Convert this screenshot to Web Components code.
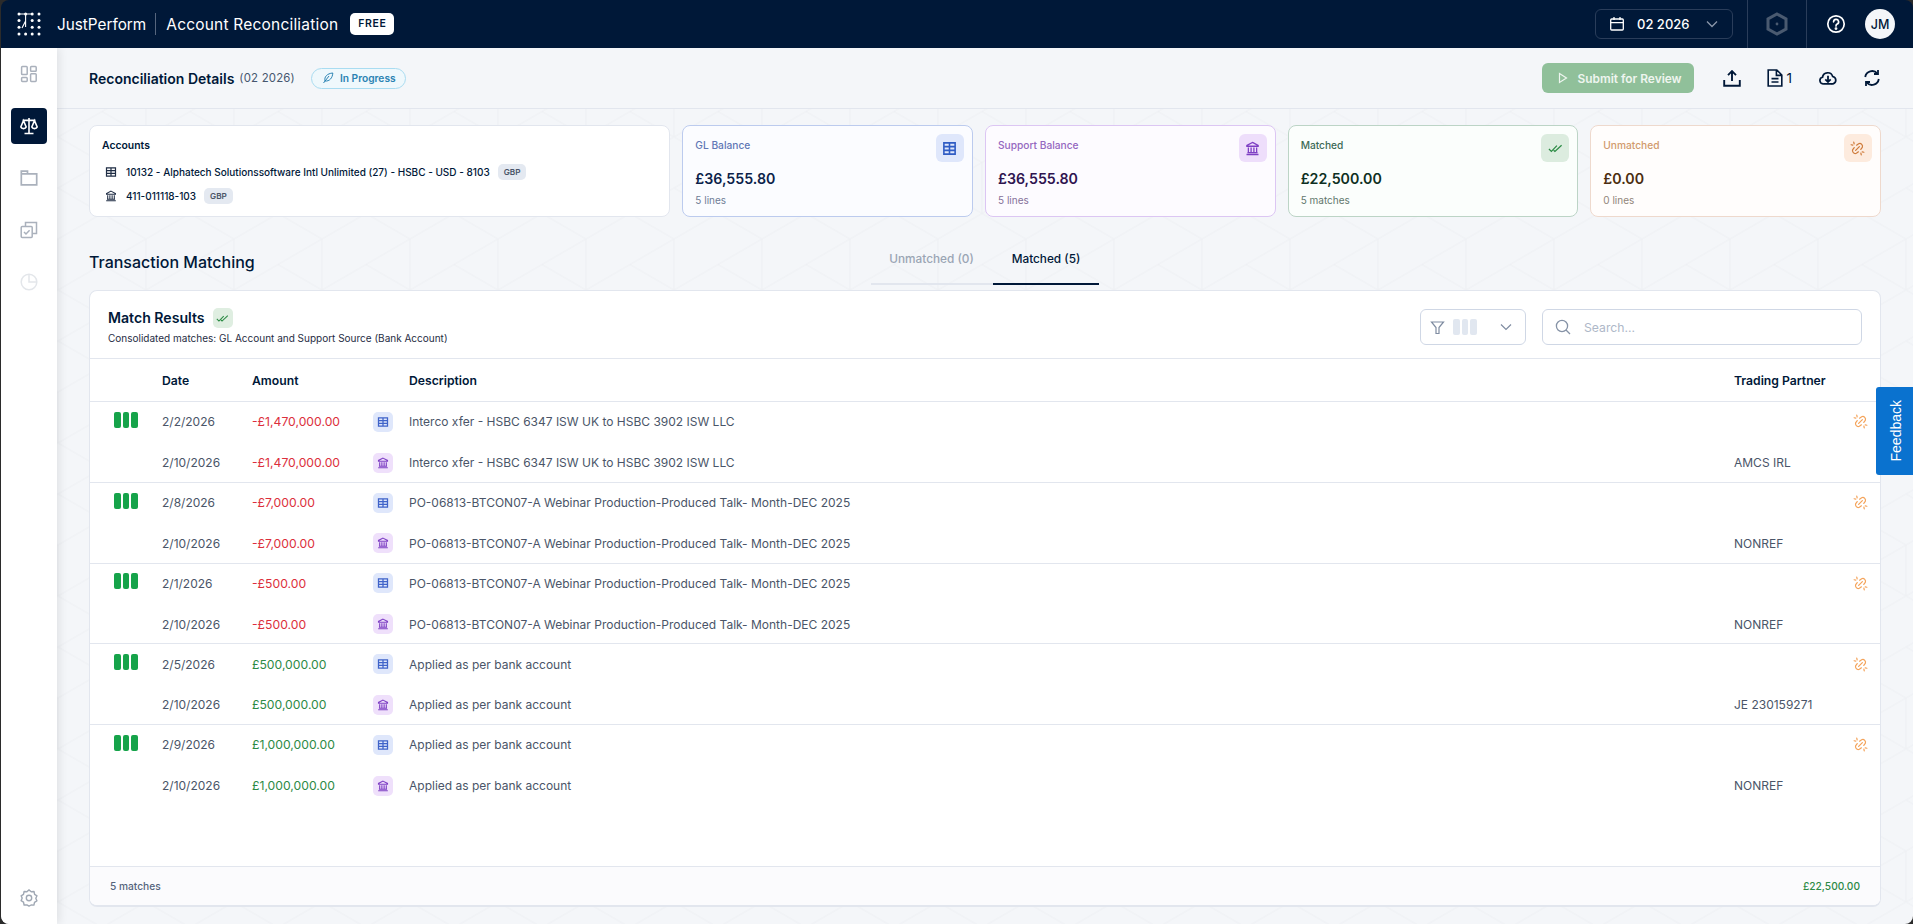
<!DOCTYPE html>
<html>
<head>
<meta charset="utf-8">
<style>
  html, body { margin: 0; height: 100%; background: #2b2b2b; overflow: hidden; }
  body { font-family: Inter, "Noto Sans", sans-serif; }
</style>
</head>
<body>
<template id="app-header-tpl">
  <style>
    :host { display: flex; align-items: center; height: 48px; flex: none; background: #001838; color: #fff; border-radius: 8px 8px 0 0; padding-left: 16px; box-sizing: border-box; }
    .logo { display: flex; width: 24px; height: 24px; margin-right: 16px; }
    .brand { font-size: 15.3px; }
    .sep { width: 1px; height: 22px; background: #56657d; margin: 0 10px 0 9px; }
    .app { font-size: 15.5px; letter-spacing: .2px; }
    .free { background: #fff; color: #001838; font-size: 10.5px; font-weight: 600; letter-spacing: .6px; border-radius: 5px; padding: 0 8px; height: 22px; line-height: 22px; margin-left: 12px; }
    .right { margin-left: auto; display: flex; align-items: center; height: 100%; }
    .period { box-sizing: border-box; width: 138px; height: 30px; border: 1px solid #2a3d5a; border-radius: 6px; display: flex; align-items: center; padding-left: 13px; font-size: 13px; font-weight: 500; margin-right: 14px; }
    .period b { font-weight: 500; margin-left: 12px; }
    .period svg:last-child { margin-left: auto; margin-right: 13px; }
    .cell { border-left: 1px solid #2a3d5a; height: 100%; width: 58px; display: flex; align-items: center; justify-content: center; }
    .tools { border-left: 1px solid #2a3d5a; height: 100%; display: flex; align-items: center; padding: 0 18px 0 19px; gap: 19px; }
    .avatar { width: 30px; height: 30px; border-radius: 50%; background: #f4f6f9; color: #001838; font-size: 12.5px; font-weight: 500; display: flex; align-items: center; justify-content: center; }
  </style>
  <svg class="logo" viewBox="0 0 24 24" fill="#fff">
    <circle cx="2" cy="2" r="1.5"/><circle cx="8.6" cy="2" r="1.5"/><circle cx="15.2" cy="2" r="1.5"/><circle cx="22" cy="2" r="1.5"/>
    <circle cx="2" cy="8.6" r="1.5"/><circle cx="15.2" cy="8.6" r="1.5"/><circle cx="22" cy="8.6" r="1.5"/>
    <circle cx="2" cy="15.2" r="1.5"/><circle cx="15.2" cy="15.2" r="1.5"/><circle cx="22" cy="15.2" r="1.5"/>
    <circle cx="2" cy="22" r="1.5"/><circle cx="8.6" cy="22" r="1.5"/><circle cx="15.2" cy="22" r="1.5"/><circle cx="22" cy="22" r="1.5"/>
    <path d="M2 2h13M8.6 2v7L5 16M8.6 9v6" stroke="#fff" stroke-width="1.1" fill="none"/>
  </svg>
  <span class="brand">JustPerform</span><span class="sep"></span><span class="app">Account Reconciliation</span><span class="free">FREE</span>
  <div class="right">
    <div class="period">
      <svg width="16" height="16" viewBox="0 0 16 16" fill="none" stroke="#fff" stroke-width="1.3"><rect x="1.7" y="3" width="12.6" height="11" rx="1"/><path d="M1.7 6.6h12.6M5 1v3M11 1v3"/></svg>
      <b>02 2026</b>
      <svg width="14" height="14" viewBox="0 0 14 14" fill="none" stroke="#8a97aa" stroke-width="1.3"><path d="M2 4.5 7 9.5l5-5"/></svg>
    </div>
    <div class="cell"><svg width="22" height="24" viewBox="0 0 22 24" fill="none" stroke="#4a5a70" stroke-width="3"><path d="M11 2 20 7v10l-9 5-9-5V7z"/><circle cx="11" cy="12" r="1.4" fill="#4a5a70" stroke="none"/></svg></div>
    <div class="tools">
      <svg width="20" height="20" viewBox="0 0 20 20" fill="none" stroke="#fff" stroke-width="1.7"><circle cx="10" cy="10" r="8.2"/><path d="M7.6 7.8a2.5 2.5 0 1 1 3.6 2.3c-.8.4-1.2 1-1.2 1.9" stroke-linecap="round"/><circle cx="10" cy="14.6" r=".6" fill="#fff"/></svg>
      <div class="avatar">JM</div>
    </div>
  </div>
</template>

<template id="side-nav-tpl">
  <style>
    :host { display: flex; flex-direction: column; align-items: center; width: 56px; flex: none; background: #fff; padding: 8px 0 0; box-sizing: border-box; box-shadow: 3px 0 8px rgba(0,0,0,.08); position: relative; z-index: 2; border-radius: 0 0 0 8px; }
    a { width: 36px; height: 36px; display: flex; align-items: center; justify-content: center; border-radius: 4px; color: #aab1bc; margin-bottom: 16px; }
    a.on { background: #001838; color: #fff; }
    a.dim { color: #e3e6ea; }
    .gear { margin-top: auto; margin-bottom: 8px; color: #a0a8b4; }
  </style>
  <a><svg width="18" height="18" viewBox="0 0 18 18" fill="none" stroke="currentColor" stroke-width="1.5"><rect x="1.6" y="1.6" width="5.6" height="8" rx=".8"/><rect x="10.6" y="1.6" width="5.6" height="4.6" rx=".8"/><rect x="1.6" y="12.6" width="5.6" height="3.8" rx=".8"/><rect x="10.6" y="8.8" width="5.6" height="7.6" rx=".8"/></svg></a>
  <a class="on"><svg width="20" height="20" viewBox="0 0 20 20" fill="none" stroke="currentColor" stroke-width="1.6"><path d="M10 2v15M5.5 17.5h9M3.5 4.4h13M4.5 4.6 1.8 11a2.8 2.2 0 0 0 5.4 0zM15.5 4.6 12.8 11a2.8 2.2 0 0 0 5.4 0z"/></svg></a>
  <a><svg width="18" height="18" viewBox="0 0 18 18" fill="none" stroke="currentColor" stroke-width="1.7"><path d="M1.3 2.2h6.2v2.6h9.2v11H1.3zM1.3 4.8h6.2"/></svg></a>
  <a><svg width="18" height="18" viewBox="0 0 18 18" fill="none" stroke="currentColor" stroke-width="1.5"><rect x="1.2" y="5.6" width="11" height="11" rx="1"/><path d="M5.5 5.5V1.5h11v11h-4M4 11l2 2 3.6-3.8"/></svg></a>
  <a class="dim"><svg width="18" height="18" viewBox="0 0 18 18" fill="none" stroke="currentColor" stroke-width="1.5"><circle cx="9" cy="9" r="7.8"/><path d="M9 1.2V9h7.8"/></svg></a>
  <a class="gear"><svg width="18" height="18" viewBox="0 0 18 18" fill="none" stroke="currentColor" stroke-width="1.4"><path d="M9 .9l2.2 1.8 2.8-.2.6 2.8 2.4 1.5L15.8 9.2l1.1 2.6-2.4 1.5-.6 2.8-2.8-.1L9 17.1 6.9 15.9l-2.8.1-.6-2.8-2.4-1.5 1.1-2.6L1.1 6.8l2.4-1.5.6-2.8 2.8.2z" stroke-linejoin="round"/><circle cx="9" cy="9" r="2.7"/></svg></a>
</template>

<template id="page-head-tpl">
  <style>
    :host { display: flex; align-items: center; height: 61px; flex: none; box-sizing: border-box; padding: 0 32px; border-bottom: 1px solid #e2e6ee; color: #001838; background: #f4f6f9; position: relative; }
    h1 { font-size: 14px; font-weight: 600; margin: 0; }
    .per { font-size: 11.4px; color: #46566e; margin-left: 5px; letter-spacing: .2px; }
    .pill { display: flex; align-items: center; gap: 6px; height: 21px; box-sizing: border-box; border: 1px solid #a9dcf1; background: #eff8fc; border-radius: 11px; padding: 0 9px 0 10px; font-size: 10.2px; font-weight: 600; color: #2a83b3; margin-left: 16px; }
    .acts { margin-left: auto; display: flex; align-items: center; color: #001838; }
    .submit { width: 152px; height: 30px; border-radius: 6px; background: #90c09a; color: #eef5ef; font-size: 11.9px; font-weight: 600; display: flex; align-items: center; box-sizing: border-box; padding-left: 16px; gap: 10px; margin-right: 29px; }
    .ic { display: flex; align-items: center; }
    .n { font-size: 13.5px; margin-left: 4px; }
  </style>
  <h1>Reconciliation Details</h1><span class="per">(02 2026)</span>
  <span class="pill"><svg width="12" height="12" viewBox="0 0 12 12" fill="none" stroke="#2a83b3" stroke-width="1"><path d="M1.5 11 7 4M3 9C2 5 5 1.5 10.8 1 10.5 6 7.5 9.5 3 9z"/></svg>In Progress</span>
  <div class="acts">
    <div class="submit"><svg width="10" height="12" viewBox="0 0 10 12" fill="none" stroke="#eef5ef" stroke-width="1.2"><path d="M1.5 1.5 8.5 6l-7 4.5z"/></svg>Submit for Review</div>
    <span class="ic" style="margin-right:26px"><svg width="18" height="18" viewBox="0 0 18 18" fill="none" stroke="currentColor" stroke-width="1.9"><path d="M9 12V2.5M5 6.2 9 2.2l4 4"/><path d="M1.2 11v5.7h15.6V11"/></svg></span>
    <span class="ic" style="margin-right:27px"><svg width="16" height="18" viewBox="0 0 16 18" fill="none" stroke="currentColor" stroke-width="1.6"><path d="M1.2 1h8.6l5 5v11H1.2zM9.4 1v5.4h5.4M4.5 9.6h7M4.5 13h7"/></svg><span class="n">1</span></span>
    <span class="ic" style="margin-right:26px"><svg width="18" height="18" viewBox="0 0 20 20" fill="none" stroke="currentColor" stroke-width="1.9"><path d="M5.5 16.5h-1a3.7 3.7 0 0 1-.6-7.3 5.8 5.8 0 0 1 11.3-.9 4.2 4.2 0 0 1 .3 8.2h-1.5"/><path d="M5.5 16.5h9"/><path d="M10 7.5v7M7 11.5l3 3 3-3" stroke-width="2"/></svg></span>
    <span class="ic"><svg width="18" height="18" viewBox="0 0 18 18" fill="none" stroke="currentColor" stroke-width="1.8"><path d="M2.2 8a7 7 0 0 1 12.2-3.5M15.8 10a7 7 0 0 1-12.2 3.5"/><path d="M15 1v4h-4M3 17v-4h4"/></svg></span>
  </div>
</template>

<template id="accounts-card-tpl">
  <style>
    :host { display: block; background: #fff; border: 1px solid #e2e6ee; border-radius: 8px; padding: 12px 12px 0; box-sizing: border-box; color: #001838; height: 92px; }
    .t { font-size: 10.4px; font-weight: 600; margin-bottom: 6px; line-height: 16px; }
    .r { display: flex; align-items: center; height: 24px; font-size: 10px; font-weight: 500; }
    svg { width: 12px; height: 12px; margin: 0 9px 0 3px; flex: none; }
    .c { background: #e4e9f1; color: #4a5568; font-size: 8.2px; font-weight: 600; height: 16px; line-height: 16px; padding: 0 6px; border-radius: 5px; margin-left: 8px; }
  </style>
  <div class="t">Accounts</div>
  <div class="r"><svg viewBox="0 0 16 16" fill="none" stroke="#1f2d44" stroke-width="1.6"><path d="M2 2.5h12v11H2zM2 6.2h12M2 9.8h12M8 2.5v11"/></svg>10132 - Alphatech Solutionssoftware Intl Unlimited (27) - HSBC - USD - 8103<span class="c">GBP</span></div>
  <div class="r"><svg viewBox="0 0 16 16" fill="none" stroke="#1f2d44" stroke-width="1.4"><path d="M8 1.5 14 4.6v1H2v-1zM3.6 7v4.6M6.5 7v4.6M9.5 7v4.6M12.4 7v4.6M2.6 12.4h10.8M1.6 14.4h12.8"/></svg>411-011118-103<span class="c">GBP</span></div>
</template>

<template id="stat-card-tpl">
  <style>
    :host { display: block; position: relative; box-sizing: border-box; height: 92px; border: 1px solid var(--bd); background: var(--bg); border-radius: 8px; padding: 12px 12px; }
    .t { font-size: 10.2px; font-weight: 500; color: var(--tc); line-height: 14px; }
    .v { font-size: 14.2px; font-weight: 600; color: var(--vc); margin-top: 17px; line-height: 20px; }
    .s { font-size: 10px; color: var(--sc); margin-top: 4px; line-height: 14px; }
    .i { position: absolute; top: 8px; right: 8px; width: 28px; height: 28px; border-radius: 6px; background: var(--ib); color: var(--ic); display: flex; align-items: center; justify-content: center; }
    ::slotted(svg) { width: 15px; height: 15px; }
  </style>
  <div class="t" id="t"></div>
  <div class="v" id="v"></div>
  <div class="s" id="s"></div>
  <div class="i"><slot></slot></div>
</template>

<template id="match-tabs-tpl">
  <style>
    :host { display: flex; align-items: flex-end; color: #001838; font-size: 11.8px; font-weight: 500; }
    div { height: 37px; box-sizing: border-box; line-height: 22px; text-align: center; }
    .a { width: 122px; color: #9aa5b4; border-bottom: 2px solid #e2e6ee; padding-right: 1px; }
    .b { width: 106px; border-bottom: 2px solid #001838; }
  </style>
  <div class="a">Unmatched (0)</div><div class="b">Matched (5)</div>
</template>

<template id="match-row-tpl">
  <style>
    :host { display: block; border-bottom: 1px solid #e2e6ee; }
    :host(:last-child) { border-bottom: 0; }
    .line { display: grid; grid-template-columns: 72px 90px 121px 36px 1fr 119px 27px; height: 39.88px; box-sizing: border-box; align-items: center; font-size: 12px; color: #4a5568; }
    .line + .line { padding-top: 1.5px; }
    .bars { display: flex; gap: 2px; padding-left: 24px; margin-top: -4px; }
    .bars i { width: 6.5px; height: 16px; border-radius: 2px; background: #16a34a; display: block; }
    .amt { color: var(--amt); font-size: 12.2px; }
    .bd { width: 20px; height: 20px; border-radius: 5px; display: flex; align-items: center; justify-content: center; }
    .gl { background: #dfe7fb; color: #3f63c9; }
    .sp { background: #efe0fb; color: #7e3fc4; }
    .bd svg { width: 12px; height: 12px; }
    .lk { color: #f4a35a; display: flex; }
    .lk svg { width: 15px; height: 15px; }
  </style>
  <div class="line">
    <div class="bars"><i></i><i></i><i></i></div><div id="d1"></div><div class="amt" id="a1"></div>
    <div class="bd gl"><svg viewBox="0 0 16 16" fill="none" stroke="currentColor" stroke-width="1.7"><path d="M2 2.5h12v11H2zM2 6.2h12M2 9.8h12M8 2.5v11"/></svg></div>
    <div id="t1"></div><div></div>
    <div class="lk"><svg viewBox="0 0 16 16" fill="none" stroke="currentColor" stroke-width="1.3" stroke-linecap="round"><path d="M7 4.5 9.2 2.9a3 3 0 0 1 3.9 4L11.5 9M9 11.5l-2.2 1.6a3 3 0 0 1-3.9-4L4.5 7M6 10l4-4M4 1.2l.4 1.8M1.2 4l1.8.4M12 14.8l-.4-1.8M14.8 12l-1.8-.4"/></svg></div>
  </div>
  <div class="line">
    <div></div><div id="d2"></div><div class="amt" id="a2"></div>
    <div class="bd sp"><svg viewBox="0 0 16 16" fill="none" stroke="currentColor" stroke-width="1.5"><path d="M8 1.5 14 4.6v1H2v-1zM3.6 7v4.6M6.5 7v4.6M9.5 7v4.6M12.4 7v4.6M2.6 12.4h10.8M1.6 14.4h12.8"/></svg></div>
    <div id="t2"></div><div id="p"></div><div></div>
  </div>
</template>

<template id="match-table-tpl">
  <style>
    :host { display: flex; flex-direction: column; background: #fff; border: 1px solid #e2e6ee; border-bottom-width: 2px; border-radius: 8px; color: #001838; flex: 1; min-height: 0; overflow: hidden; }
    .top { display: flex; height: 68px; flex: none; box-sizing: border-box; padding: 17px 18px 0 18px; border-bottom: 1px solid #e2e6ee; }
    .ttl { display: flex; align-items: center; gap: 8px; font-size: 14.1px; font-weight: 600; line-height: 20px; }
    .bd { width: 20px; height: 20px; border-radius: 5px; background: #dfeee1; color: #2a8a43; display: flex; align-items: center; justify-content: center; }
    .bd svg { width: 13px; height: 13px; }
    .sub { font-size: 10px; margin-top: 4px; line-height: 12px; color: #1f2d44; }
    .ctl { margin-left: auto; display: flex; gap: 16px; margin-top: 1px; }
    .flt { width: 106px; height: 36px; box-sizing: border-box; border: 1px solid #cfd7e5; border-radius: 6px; display: flex; align-items: center; padding-left: 9px; }
    .flt i { width: 6.5px; height: 16px; background: #e1e7f0; border-radius: 2px; margin-right: 2px; display: block; }
    .flt svg:first-child { margin-right: 8px; }
    .flt svg:last-child { margin-left: auto; margin-right: 12px; }
    .srch { width: 320px; height: 36px; box-sizing: border-box; border: 1px solid #cfd7e5; border-radius: 6px; display: flex; align-items: center; padding-left: 12px; gap: 13px; color: #aeb8c8; font-size: 12.2px; }
    .head { display: grid; grid-template-columns: 72px 90px 157px 1fr 146px; height: 43px; flex: none; align-items: center; box-sizing: border-box; border-bottom: 1px solid #e2e6ee; font-size: 12.2px; font-weight: 600; }
    .body { flex: 1; min-height: 0; }
    .foot { flex: none; height: 39px; display: flex; align-items: center; justify-content: space-between; padding: 0 20px; background: #fbfbfd; border-top: 1px solid #e2e6ee; font-size: 10.2px; font-weight: 500; color: #55647c; box-sizing: border-box; }
    .foot b { font-weight: 500; color: #2d8a45; }
  </style>
  <div class="top">
    <div>
      <div class="ttl">Match Results<span class="bd"><svg viewBox="0 0 16 16" fill="none" stroke="currentColor" stroke-width="1.3"><path d="M1 8.5l2.6 2.6L9.5 5M6 9.8l1.4 1.3L14.5 4.5"/></svg></span></div>
      <div class="sub">Consolidated matches: GL Account and Support Source (Bank Account)</div>
    </div>
    <div class="ctl">
      <div class="flt">
        <svg width="15" height="15" viewBox="0 0 15 15" fill="none" stroke="#7f8ca1" stroke-width="1.2"><path d="M1.5 2h12L9 7.5V13.5H6V7.5z"/></svg>
        <i></i><i></i><i></i>
        <svg width="14" height="14" viewBox="0 0 14 14" fill="none" stroke="#7f8ca1" stroke-width="1.2"><path d="M2 4.5 7 9.5l5-5"/></svg>
      </div>
      <div class="srch"><svg width="16" height="16" viewBox="0 0 16 16" fill="none" stroke="#8592a6" stroke-width="1.3"><circle cx="7" cy="7" r="5.6"/><path d="M11 11l4 4"/></svg>Search...</div>
    </div>
  </div>
  <div class="head"><div></div><div>Date</div><div>Amount</div><div>Description</div><div>Trading Partner</div></div>
  <div class="body"><slot></slot></div>
  <div class="foot"><span>5 matches</span><b>£22,500.00</b></div>
</template>

<template id="feedback-tab-tpl">
  <style>
    :host { position: absolute; right: 0; top: 387px; width: 37px; height: 88px; box-sizing: border-box; padding-left: 3px; background: #0a72cf; border-radius: 3px 0 0 3px; color: #fff; display: flex; align-items: center; justify-content: center; z-index: 5; }
    span { writing-mode: vertical-rl; transform: rotate(180deg); font-family: "Liberation Sans", Arial, sans-serif; font-size: 14px; }
  </style>
  <span>Feedback</span>
</template>

<template id="recon-page-tpl">
  <style>
    :host { display: flex; flex-direction: column; height: 924px; box-sizing: border-box; padding-left: 1px; position: relative; }
    .main { flex: 1; min-height: 0; display: flex; background: #f4f6f9; border-radius: 0 0 8px 8px; overflow: hidden; }
    .col { flex: 1; min-width: 0; display: flex; flex-direction: column; position: relative; }
    .pat { position: absolute; left: 0; top: 0; width: 100%; height: 100%; }
    .content { flex: 1; min-height: 0; display: flex; flex-direction: column; padding: 16px 32px 17px; position: relative; }
    .cards { display: grid; grid-template-columns: 2fr 1fr 1fr 1fr 1fr; gap: 12px; height: 92px; flex: none; }
    .bar { display: flex; height: 73px; flex: none; position: relative; align-items: flex-end; }
    h2 { font-size: 16px; font-weight: 500; color: #001838; margin: 0 0 17px; line-height: 22px; }
    match-tabs { position: absolute; left: 782px; bottom: 5px; }
  </style>
  <app-header></app-header>
  <div class="main">
    <side-nav></side-nav>
    <div class="col">
      <svg class="pat" xmlns="http://www.w3.org/2000/svg"><defs><pattern id="hex" width="88" height="153" patternUnits="userSpaceOnUse" x="1" y="12.5"><path d="M0 25.5 44 0 88 25.5V76.5M0 25.5V76.5L44 102 88 76.5M44 102V153M44 51 0 76.5M44 51 88 76.5M44 51 88 25.5M0 127.5 44 153M0 127.5 44 102M88 127.5 44 153" fill="none" stroke="#edeff3" stroke-width="1"/></pattern></defs><rect width="100%" height="100%" fill="url(#hex)"/></svg>
      <page-head></page-head>
      <div class="content">
        <div class="cards">
          <accounts-card></accounts-card>
          <stat-card label="GL Balance" value="£36,555.80" sub="5 lines" tone="blue"><svg viewBox="0 0 16 16" fill="none" stroke="currentColor" stroke-width="1.7"><path d="M2 2h12v12H2zM2 6h12M2 10h12M8 2v12"/></svg></stat-card>
          <stat-card label="Support Balance" value="£36,555.80" sub="5 lines" tone="purple"><svg viewBox="0 0 16 16" fill="none" stroke="currentColor" stroke-width="1.4"><path d="M8 1.5 14 4.6v1H2v-1zM3.6 7v4.6M6.5 7v4.6M9.5 7v4.6M12.4 7v4.6M2.6 12.4h10.8M1.6 14.4h12.8"/></svg></stat-card>
          <stat-card label="Matched" value="£22,500.00" sub="5 matches" tone="green"><svg viewBox="0 0 16 16" fill="none" stroke="currentColor" stroke-width="1.3"><path d="M1 8.5l2.6 2.6L9.5 5M6 9.8l1.4 1.3L14.5 4.5"/></svg></stat-card>
          <stat-card label="Unmatched" value="£0.00" sub="0 lines" tone="orange"><svg viewBox="0 0 16 16" fill="none" stroke="currentColor" stroke-width="1.3" stroke-linecap="round"><path d="M7 4.5 9.2 2.9a3 3 0 0 1 3.9 4L11.5 9M9 11.5l-2.2 1.6a3 3 0 0 1-3.9-4L4.5 7M6 10l4-4M4 1.2l.4 1.8M1.2 4l1.8.4M12 14.8l-.4-1.8M14.8 12l-1.8-.4"/></svg></stat-card>
        </div>
        <div class="bar"><h2>Transaction Matching</h2><match-tabs></match-tabs></div>
        <slot></slot>
      </div>
    </div>
  </div>
  <feedback-tab></feedback-tab>
</template>

<recon-page>
  <match-table>
    <match-row d1="2/2/2026" d2="2/10/2026" amt="-£1,470,000.00" text="Interco xfer - HSBC 6347 ISW UK to HSBC 3902 ISW LLC" partner="AMCS IRL" neg></match-row>
    <match-row d1="2/8/2026" d2="2/10/2026" amt="-£7,000.00" text="PO-06813-BTCON07-A Webinar Production-Produced Talk- Month-DEC 2025" partner="NONREF" neg></match-row>
    <match-row d1="2/1/2026" d2="2/10/2026" amt="-£500.00" text="PO-06813-BTCON07-A Webinar Production-Produced Talk- Month-DEC 2025" partner="NONREF" neg></match-row>
    <match-row d1="2/5/2026" d2="2/10/2026" amt="£500,000.00" text="Applied as per bank account" partner="JE 230159271"></match-row>
    <match-row d1="2/9/2026" d2="2/10/2026" amt="£1,000,000.00" text="Applied as per bank account" partner="NONREF"></match-row>
  </match-table>
</recon-page>

<script>
  // simple elements: clone the template into an open shadow root
  function simple(tag) {
    customElements.define(tag, class extends HTMLElement {
      constructor() {
        super();
        const shadow = this.attachShadow({ mode: 'open' });
        shadow.appendChild(document.getElementById(tag + '-tpl').content.cloneNode(true));
      }
    });
  }
  ['app-header', 'side-nav', 'page-head', 'accounts-card', 'match-tabs', 'match-table', 'feedback-tab', 'recon-page'].forEach(simple);

  const tones = {
    blue:   { bd: '#bccbee', bg: '#fbfcff', tc: '#5f77b5', vc: '#0c1f4a', sc: '#6f7d96', ib: '#dfe7fb', ic: '#2f5cc4' },
    purple: { bd: '#dcc6f3', bg: '#fdfbff', tc: '#9467c0', vc: '#2f1450', sc: '#85719a', ib: '#eedefb', ic: '#7e3fc4' },
    green:  { bd: '#bcd4c6', bg: '#fbfefc', tc: '#3d6a56', vc: '#0d2f22', sc: '#62786c', ib: '#dcecdf', ic: '#2a8a43' },
    orange: { bd: '#eed9cd', bg: '#fffdfc', tc: '#d19a6c', vc: '#4c2d10', sc: '#91857a', ib: '#fdebde', ic: '#cf7c3c' }
  };

  class StatCard extends HTMLElement {
    constructor() {
      super();
      const shadow = this.attachShadow({ mode: 'open' });
      shadow.appendChild(document.getElementById('stat-card-tpl').content.cloneNode(true));
      shadow.getElementById('t').textContent = this.getAttribute('label');
      shadow.getElementById('v').textContent = this.getAttribute('value');
      shadow.getElementById('s').textContent = this.getAttribute('sub');
      const c = tones[this.getAttribute('tone')];
      for (const k in c) this.style.setProperty('--' + k, c[k]);
    }
  }
  customElements.define('stat-card', StatCard);

  class MatchRow extends HTMLElement {
    constructor() {
      super();
      const shadow = this.attachShadow({ mode: 'open' });
      shadow.appendChild(document.getElementById('match-row-tpl').content.cloneNode(true));
      const get = n => this.getAttribute(n);
      shadow.getElementById('d1').textContent = get('d1');
      shadow.getElementById('d2').textContent = get('d2');
      shadow.getElementById('a1').textContent = get('amt');
      shadow.getElementById('a2').textContent = get('amt');
      shadow.getElementById('t1').textContent = get('text');
      shadow.getElementById('t2').textContent = get('text');
      shadow.getElementById('p').textContent = get('partner');
      this.style.setProperty('--amt', this.hasAttribute('neg') ? '#dc2f3c' : '#2d8a45');
    }
  }
  customElements.define('match-row', MatchRow);
</script>
</body>
</html>
